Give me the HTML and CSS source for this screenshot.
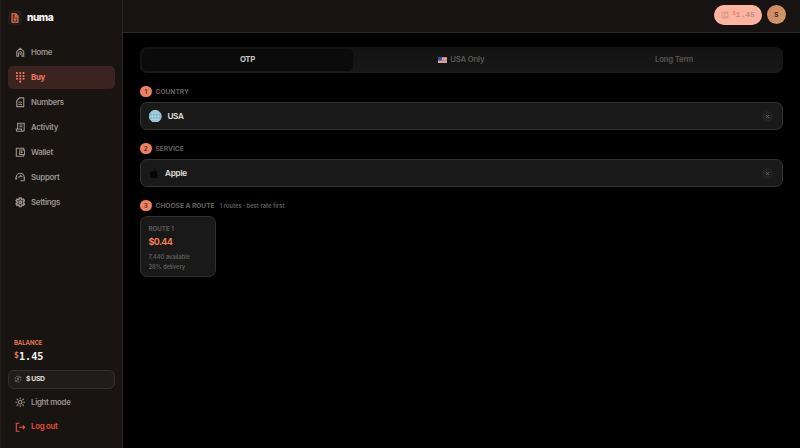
FILE: index.html
```
<!DOCTYPE html>
<html lang="en">
<head>
  <meta charset="UTF-8" />
  <meta name="viewport" content="width=device-width, initial-scale=1.0" />
  <title>numa - Buy</title>
  <link rel="stylesheet" href="styles.css">
</head>
<body>
<div class="app">
  <aside class="sidebar">
    <div class="brand">
      <span class="logo">
        <svg viewBox="0 0 24 24"><path d="M14 2H5v20h14V8z" /><path class="chip" d="M8 6h5v5h3v3H8z" /><path d="M13 3v6h6M8 15h8M12 15v5" /></svg>
      </span>
      <span class="brand-name">numa</span>
    </div>

    <nav class="nav">
      <a class="nav-item">
        <svg viewBox="0 0 24 24"><path d="M4 10l8-7 8 7v11h-4v-6a4 4 0 0 0-8 0v6H4zM12 14v4" /></svg>
        <span>Home</span>
      </a>
      <a class="nav-item active">
        <svg class="dots" viewBox="0 0 24 24"><path d="M4.500 2.500h.01M12 2.500h.01M19.500 2.500h.01M4.500 9h.01M12 9h.01M19.500 9h.01M4.500 15.500h.01M12 15.500h.01M19.500 15.500h.01M12 22h.01" /></svg>
        <span>Buy</span>
      </a>
      <a class="nav-item">
        <svg viewBox="0 0 24 24"><path d="M10 2h10v20H4V8z" /><path d="M9 11v2M12 10v3M15 11v2M9 16v2M12 15v3M15 16v2" /></svg>
        <span>Numbers</span>
      </a>
      <a class="nav-item">
        <svg viewBox="0 0 24 24"><path d="M6 16V3h15v15a3 3 0 0 1-3 3H6a3 3 0 0 1-3-3v-2h12v2a3 3 0 0 0 3 3M10 7h7M10 11h7" /></svg>
        <span>Activity</span>
      </a>
      <a class="nav-item">
        <svg viewBox="0 0 24 24"><path d="M20 7V3H3v18h17v-4" /><path d="M11 7h11v10H11z" /><circle cx="15.500" cy="12" r="1" /></svg>
        <span>Wallet</span>
      </a>
      <a class="nav-item">
        <svg viewBox="0 0 24 24"><path d="M3 17v-5a9 9 0 0 1 18 0v8h-9" /><path d="M2 12v5M22 12v5M7 12c3 0 5-2 6-4 1 2 2 3 4 3M9 14v1M15 14v1" /></svg>
        <span>Support</span>
      </a>
      <a class="nav-item">
        <svg class="gear" viewBox="0 0 24 24"><path d="M10 2h4l.6 3 2 1.100 2.900-1 2 3.500-2.300 2.100v2.600l2.300 2.100-2 3.500-2.900-1-2 1.100L14 22h-4l-.6-3-2-1.100-2.900 1-2-3.500 2.300-2.100v-2.600L2.500 8.600l2-3.500 2.900 1 2-1.100z" /><circle cx="12" cy="12" r="3" /></svg>
        <span>Settings</span>
      </a>
    </nav>

    <div class="side-bottom">
      <div class="balance-label">BALANCE</div>
      <div class="balance"><sup>$</sup>1.45</div>
      <div class="currency">
        <svg viewBox="0 0 24 24"><path d="M3 14a9 9 0 0 1 15-8l2 2M20 3v5h-5M21 11a9 9 0 0 1-15 8l-2-2M4 21v-5h5" /><path d="M15 9h-4a1.500 1.500 0 0 0 0 3h2a1.500 1.500 0 0 1 0 3H9M12 7v10" /></svg>
        <span>$ USD</span>
      </div>
      <a class="nav-item theme">
        <svg viewBox="0 0 24 24"><circle cx="12" cy="12" r="4" /><path d="M12 1v4M12 19v4M1 12h4M19 12h4M4 4l3 3M17 17l3 3M4 20l3-3M17 7l3-3" /></svg>
        <span>Light mode</span>
      </a>
      <a class="nav-item logout">
        <svg viewBox="0 0 24 24"><path d="M10 3H3v18h7M9 12h13M18 8l4 4-4 4" /></svg>
        <span>Log out</span>
      </a>
    </div>
  </aside>

  <div class="page">
    <header class="topbar">
      <div class="wallet-pill">
        <svg viewBox="0 0 24 24"><path d="M20 7V3H3v18h17v-4" /><path d="M10 7h11v10H10z" /><path d="M15 11v2" /></svg>
        <span><sup>$</sup>1.45</span>
      </div>
      <div class="avatar">S</div>
    </header>

    <main class="content">
      <div class="tabs">
        <div class="tab active">OTP</div>
        <div class="tab">
          <svg class="flag" viewBox="0 0 18 12">
            <rect width="18" height="12" fill="#e0c4c6" />
            <path d="M0 1h18M0 4h18M0 7h18M0 10h18" stroke="#c8676f" stroke-width="1.500" />
            <rect width="8" height="7" fill="#2f568e" />
          </svg>
          <span>USA Only</span>
        </div>
        <div class="tab">Long Term</div>
      </div>

      <section class="step">
        <h2 class="step-title"><span class="num">1</span>COUNTRY</h2>
        <div class="field">
          <svg class="globe" viewBox="0 0 24 24"><circle cx="12" cy="12" r="11.500" fill="#79b5ce" /><path d="M1 12h22M12 1v22M3.500 6h17M3.500 18h17" /><ellipse cx="12" cy="12" rx="6" ry="11" /></svg>
          <span class="value">USA</span>
          <span class="clear"><svg viewBox="0 0 10 10"><path d="M2 2l6 6M8 2l-6 6" /></svg></span>
        </div>
      </section>

      <section class="step">
        <h2 class="step-title"><span class="num">2</span>SERVICE</h2>
        <div class="field service">
          <svg class="apple" viewBox="0 0 24 24"><path d="M16 1c.3 3-2 5-4.500 5C11.300 3.500 13.500 1.300 16 1zM21 8c-4 2.500-3 7.500 1 9-1.500 4-3.500 6-5.500 6-1.300 0-2.500-.8-4-.8s-2.700.8-4 .8C4.500 23 1.500 17 1.500 13c0-6 5-8 10-5.500C14 6 19 5.500 21 8z" /></svg>
          <span class="value">Apple</span>
          <span class="clear"><svg viewBox="0 0 10 10"><path d="M2 2l6 6M8 2l-6 6" /></svg></span>
        </div>
      </section>

      <section class="step">
        <h2 class="step-title"><span class="num">3</span>CHOOSE A ROUTE <small>1 routes · best rate first</small></h2>
        <div class="route">
          <div class="route-name">ROUTE 1</div>
          <div class="route-price">$0.44</div>
          <div class="route-info">7,440 available</div>
          <div class="route-info">28% delivery</div>
        </div>
      </section>
    </main>
  </div>
</div>
</body>
</html>
```
FILE: styles.css
```
* {
  box-sizing: border-box;
}

body {
  margin: 0;
  background: #000;
  color: #e4e1df;
  font-family: "Inter", "Liberation Sans", sans-serif;
  font-size: 7.8px;
  line-height: 1.2;
}

svg {
  display: block;
  flex: none;
  fill: none;
  stroke: currentColor;
  stroke-width: 2;
}

.app {
  display: flex;
  height: 448px;
}

/* sidebar */
.sidebar {
  width: 123px;
  flex: none;
  display: flex;
  flex-direction: column;
  padding: 9px 7px 10px 7px;
  background: #181412;
  border-left: 1px solid #221e1c;
  border-right: 1px solid #2a2726;
}

.brand {
  display: flex;
  align-items: center;
  gap: 5px;
  height: 17px;
}

.logo {
  display: grid;
  place-items: center;
  width: 14px;
  height: 15px;
  border-radius: 4px;
  background: #241c1a;
  color: #e5734f;
}

.logo svg {
  width: 10px;
  height: 10px;
  stroke-width: 3;
}

.logo .chip {
  fill: #8d3d28;
  stroke: none;
}

.brand-name {
  color: #fbf8f6;
  font-size: 10.2px;
  font-weight: 800;
  letter-spacing: -0.55px;
}

.nav {
  display: flex;
  flex-direction: column;
  gap: 2.5px;
  margin-top: 15px;
}

.nav-item {
  display: flex;
  align-items: center;
  gap: 6px;
  height: 22.5px;
  padding-left: 6.5px;
  border-radius: 5px;
  color: #9a9490;
  font-weight: 600;
  letter-spacing: -0.25px;
}

.nav-item svg {
  width: 10.5px;
  height: 10.5px;
  stroke-width: 2.5;
}

.nav-item.active {
  background: #3b2420;
  color: #f27a59;
  font-weight: 700;
}

.nav-item svg.dots {
  stroke-width: 4.8;
  stroke-linecap: round;
}

.nav-item svg.gear {
  stroke-width: 3.4;
}

.side-bottom {
  margin-top: auto;
}

.balance-label {
  padding-left: 6px;
  color: #e5734f;
  font-size: 6px;
  font-weight: 700;
  letter-spacing: -0.1px;
}

.balance {
  padding: 3px 0 0 6px;
  height: 23.5px;
  color: #f7f3f0;
  font-family: "DejaVu Sans Mono", monospace;
  font-size: 10.2px;
  font-weight: 700;
  line-height: 15px;
}

sup {
  color: #e5734f;
  font-size: 0.8em;
  line-height: 0;
  vertical-align: 2.5px;
}

.currency {
  display: flex;
  align-items: center;
  gap: 4px;
  height: 19.5px;
  padding-left: 5px;
  border: 1px solid #34302d;
  border-radius: 6px;
  background: #201c19;
  font-size: 6.8px;
  font-weight: 700;
  letter-spacing: -0.35px;
}

.currency svg {
  width: 8px;
  height: 8px;
  color: #77706c;
}

.theme {
  margin-top: 2px;
}

.logout {
  margin-top: 2px;
  color: #e84f3d;
}

/* top bar */
.page {
  flex: 1;
  min-width: 0;
}

.topbar {
  display: flex;
  align-items: center;
  justify-content: flex-end;
  gap: 5px;
  height: 33px;
  padding: 0 14px 3px 0;
  background: #171312;
  border-bottom: 1px solid #2a2726;
}

.wallet-pill {
  display: flex;
  align-items: center;
  justify-content: center;
  gap: 3px;
  width: 48px;
  height: 20px;
  border-radius: 10px;
  background: #ffb3a1;
  color: #b98f82;
  font-family: "Liberation Mono", monospace;
  font-size: 8px;
  font-weight: 700;
}

.wallet-pill svg {
  width: 8px;
  height: 8px;
}

.wallet-pill sup {
  color: #ff7b70;
  font-size: 0.7em;
  vertical-align: 2px;
}

.avatar {
  display: grid;
  place-items: center;
  width: 19px;
  height: 19px;
  padding-top: 2px;
  border-radius: 50%;
  background: linear-gradient(135deg, #d58467, #cc9f64);
  color: #3b211b;
  font-size: 6.5px;
  font-weight: 700;
}

/* content */
.content {
  padding: 14px 17.5px 0 17px;
}

.tabs {
  display: grid;
  grid-template-columns: repeat(3, 1fr);
  height: 25.5px;
  padding: 2px;
  border-radius: 7px;
  background: linear-gradient(#121212, #181818);
}

.tab {
  display: flex;
  align-items: center;
  justify-content: center;
  gap: 3px;
  border-radius: 5px;
  color: #595653;
  font-weight: 600;
  letter-spacing: -0.22px;
}

.tab.active {
  margin-right: 2px;
  background: #0b0b0b;
  color: #c9c6c3;
  font-weight: 700;
  letter-spacing: -0.35px;
}

.flag {
  width: 9px;
  height: 6px;
  stroke: none;
}

.step {
  margin-top: 12px;
}

.tabs + .step {
  margin-top: 12.5px;
}

.step-title {
  display: flex;
  align-items: center;
  height: 12.5px;
  margin: 0 0 4.5px;
  padding-top: 2px;
  color: #65615e;
  font-size: 6.7px;
  font-weight: 700;
  letter-spacing: -0.05px;
}

.num {
  display: grid;
  place-items: center;
  flex: none;
  width: 11.5px;
  height: 11.5px;
  margin: 0 4px 2px 0;
  border-radius: 50%;
  background: #ee8063;
  color: #6b3426;
  font-size: 6.2px;
  letter-spacing: 0;
}

.step-title small {
  margin-left: 5px;
  font-size: 5.8px;
  font-weight: 600;
  letter-spacing: 0.03px;
}

.field {
  display: flex;
  align-items: center;
  gap: 6px;
  height: 28px;
  padding: 0 9px 0 8px;
  border: 1px solid #343434;
  border-radius: 7px;
  background: #191919;
  font-size: 8.1px;
  font-weight: 600;
  letter-spacing: -0.35px;
}

.value {
  padding-top: 2px;
}

.globe {
  width: 12.5px;
  height: 12.5px;
  stroke: #b8d9e2;
  stroke-width: 1.5;
}

.apple {
  width: 10px;
  height: 11px;
  fill: #050505;
  stroke: none;
}

.service {
  letter-spacing: -0.2px;
}

.clear {
  display: grid;
  place-items: center;
  width: 11px;
  height: 11px;
  margin-left: auto;
  border-radius: 50%;
  background: #222;
  color: #686664;
}

.clear svg {
  width: 5px;
  height: 5px;
  stroke-width: 1.6;
}

.route {
  width: 76px;
  height: 61px;
  padding: 8px 0 0 7.5px;
  border: 1px solid #303030;
  border-radius: 7px;
  background: #191919;
}

.route-name {
  color: #5f5c5a;
  font-size: 6.2px;
  font-weight: 700;
  letter-spacing: 0;
  line-height: 8px;
}

.route-price {
  margin: 3px 0 3.5px;
  color: #f47c5b;
  font-size: 9px;
  font-weight: 700;
  letter-spacing: -0.65px;
  line-height: 12px;
}

.route-info {
  color: #5d5a58;
  font-size: 5.9px;
  font-weight: 600;
  letter-spacing: -0.1px;
  line-height: 10px;
}
```
